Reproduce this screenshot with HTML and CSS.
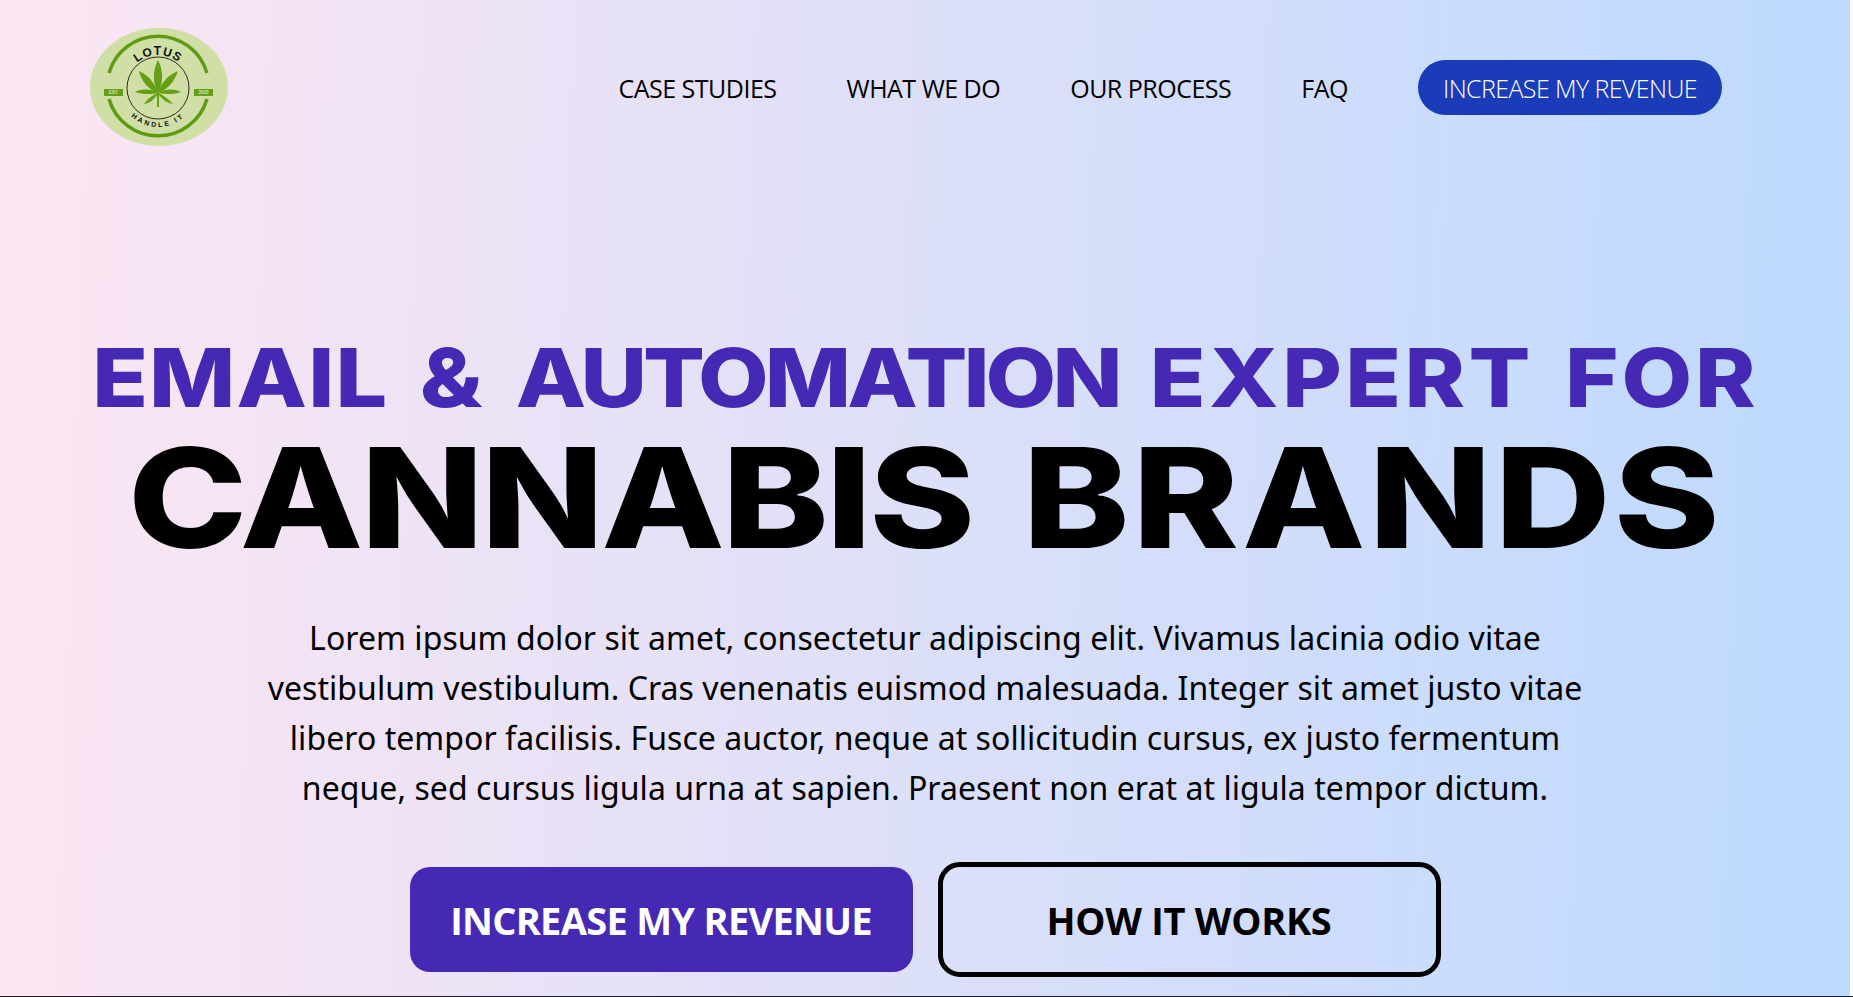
FILE: index.html
```html
<!DOCTYPE html>
<html lang="en">
<head>
<meta charset="utf-8">
<title>Lotus Handle It</title>
<link rel="stylesheet" href="styles.css">
</head>
<body>
<section class="hero">
  <header class="header">
    <a class="logo" href="#" aria-label="Lotus Handle It">
      <svg viewBox="0 0 138 118" width="138" height="118">
        <defs>
          <path id="arcTop" d="M35 60 A33 33 0 0 1 101 60"/>
          <path id="arcBottom" d="M29 60 A39 39 0 0 0 107 60"/>
        </defs>
        <ellipse cx="69" cy="59" rx="69" ry="59" fill="#cfdfa5"/>
        <path d="M19 45 A51 51 0 0 1 117 45" class="ring"/>
        <path d="M19 71 A51 51 0 0 0 117 71" class="ring"/>
        <circle cx="68" cy="60" r="31" fill="none" stroke="#2b2b1e" stroke-width="1"/>
        <text class="arc-text top"><textPath href="#arcTop" startOffset="50%" text-anchor="middle">LOTUS</textPath></text>
        <text class="arc-text bottom"><textPath href="#arcBottom" startOffset="50%" text-anchor="middle">HANDLE IT</textPath></text>
        <g fill="#659f16">
          <path d="M68 65 C62 54 63 42 68 32 C73 42 74 54 68 65Z"/>
          <path d="M68 65 C58 62 51 52 49 43 C58 47 65 55 68 65Z"/>
          <path d="M68 65 C78 62 85 52 88 43 C78 47 71 55 68 65Z"/>
          <path d="M68 65 C60 60 50 61 45 64 C50 66 60 67 68 65Z"/>
          <path d="M68 65 C76 60 86 61 91 64 C86 66 76 67 68 65Z"/>
          <path d="M68 65 C63 67 57 71 54 76 C60 75 65 71 68 65Z"/>
          <path d="M68 65 C73 67 79 71 83 76 C77 75 71 71 68 65Z"/>
          <rect x="67" y="65" width="2" height="14"/>
        </g>
        <rect x="14" y="61" width="19" height="7" fill="#659f16"/>
        <rect x="104" y="61" width="19" height="7" fill="#659f16"/>
        <text class="est" x="23.5" y="66.2">EST.</text>
        <text class="est" x="113.5" y="66.2">2023</text>
      </svg>
    </a>
    <nav class="nav">
      <a href="#">CASE STUDIES</a>
      <a href="#">WHAT WE DO</a>
      <a href="#">OUR PROCESS</a>
      <a href="#">FAQ</a>
      <a class="nav-cta" href="#">INCREASE MY REVENUE</a>
    </nav>
  </header>
  <div class="content">
    <h1 class="title">
      <span class="line-one"><span class="w-email">EMAIL</span> <span class="w-amp">&amp;</span> <span class="w-auto">AUTOMATION</span> <span class="w-expert">EXPERT</span> <span class="w-for">FOR</span></span>
      <span class="line-two"><span class="w-cannabis">CANNABIS</span> <span class="w-brands">BRANDS</span></span>
    </h1>
    <p class="lead">Lorem ipsum dolor sit amet, consectetur adipiscing elit. Vivamus lacinia odio vitae vestibulum vestibulum. Cras venenatis euismod malesuada. Integer sit amet justo vitae libero tempor facilisis. Fusce auctor, neque at sollicitudin cursus, ex justo fermentum neque, sed cursus ligula urna at sapien. Praesent non erat at ligula tempor dictum.</p>
    <div class="actions">
      <a class="btn btn-primary" href="#">INCREASE MY REVENUE</a>
      <a class="btn btn-outline" href="#">HOW IT WORKS</a>
    </div>
  </div>
</section>
<div class="next-section"></div>
</body>
</html>
```
FILE: styles.css
```css
* { box-sizing: border-box; }
html, body { margin: 0; height: 997px; overflow: hidden; }
body { font-family: "Open Sans", "Noto Sans", sans-serif; color: #000; background: #fff; }
a { color: inherit; text-decoration: none; }
.hero {
  width: 1850px;
  height: 996px;
  background: linear-gradient(92deg, #fde6f2 0%, #bcd9ff 100%);
  display: flex;
  flex-direction: column;
}
.next-section { height: 1px; background: #1c1c24; }
.header {
  display: flex;
  justify-content: space-between;
  align-items: flex-start;
  padding: 28px 128px 0 90px;
}
.logo { display: block; height: 118px; }
.logo svg { display: block; }
.ring { fill: none; stroke: #5f9a12; stroke-width: 3.5; }
.arc-text { font-family: "Liberation Sans", sans-serif; font-weight: 700; fill: #111; }
.arc-text.top { font-size: 12px; letter-spacing: 1px; }
.arc-text.bottom { font-size: 7px; letter-spacing: 2.4px; }
.est { font-family: "Liberation Sans", sans-serif; font-size: 4.5px; font-weight: 700; fill: #dbe8b8; text-anchor: middle; }
.nav { display: flex; align-items: center; gap: 70px; margin-top: 32px; font-size: 25px; letter-spacing: -0.5px; }
.nav-cta {
  background: #1a3cb8;
  color: #fff;
  height: 55px;
  padding: 0 25px;
  border-radius: 28px;
  display: flex;
  align-items: center;
  font-weight: 300;
  letter-spacing: -0.6px;
}
.content { display: flex; flex-direction: column; align-items: center; margin-top: 181px; }
.title { margin: 0; display: flex; flex-direction: column; align-items: center; font-family: "Inter", sans-serif; }
.line-one { font-size: 81px; font-weight: 800; line-height: 103px; color: #4529b4; white-space: nowrap; word-spacing: 10px; transform: scaleX(1.13); }
.line-two { font-size: 139px; font-weight: 800; line-height: 135px; white-space: nowrap; word-spacing: 13px; transform: scaleX(1.155); }
.w-email { letter-spacing: 1px; }
.w-amp { letter-spacing: 2px; }
.w-auto { letter-spacing: -3.5px; }
.w-expert { letter-spacing: 3px; }
.w-for { letter-spacing: 2.5px; }
.w-cannabis { letter-spacing: -2.3px; }
.w-brands { letter-spacing: 2.7px; }
.lead { margin: 48px 0 0; width: 1340px; font-family: "Noto Sans", sans-serif; text-align: center; font-size: 32px; line-height: 50px; letter-spacing: 0.05px; }
.actions { display: flex; align-items: center; gap: 25px; margin-top: 49px; }
.btn {
  width: 503px;
  display: flex;
  align-items: center;
  justify-content: center;
  font-size: 38px;
  font-weight: 700;
  letter-spacing: -0.7px;
}
.btn-primary { height: 105px; background: #4529b4; color: #fff; border-radius: 20px; }
.btn-outline { height: 115px; border: 5px solid #000; border-radius: 22px; letter-spacing: -0.3px; }
```
